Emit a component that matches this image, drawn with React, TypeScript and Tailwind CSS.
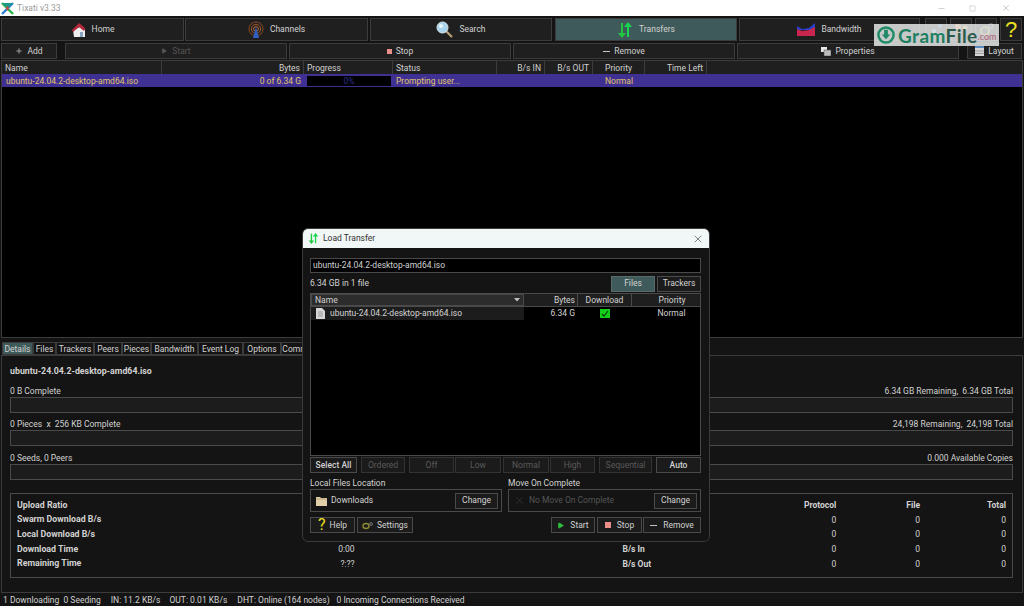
import React from "react";
import { Minus, Square, X, Plus, Play } from "lucide-react";

const TixatiLogo = () => (
  <svg width="13" height="13" viewBox="0 0 13 13">
    <path d="M1 1 L12 12" stroke="#2bb34a" strokeWidth="2.4" />
    <path d="M12 1 L1 12" stroke="#2f7fd0" strokeWidth="2.4" />
    <path d="M1 1 H12 L6.5 6 Z" fill="#1c9a8a" />
    <path d="M5 6 L6.5 4 L8 6 L6.5 9 Z" fill="#d8433a" />
  </svg>
);

const HomeIcon = () => (
  <svg width="15" height="16" viewBox="0 0 15 16">
    <path d="M2 8 L9 5 L14 8 V15 H3 Z" fill="#eeeeee" />
    <path d="M1 8 L8 1 L14 6 L13 9 L8 5 L2 10 Z" fill="#b5283a" />
    <rect x="9" y="10" width="3" height="5" fill="#8aa6c0" />
  </svg>
);

const ChannelsIcon = () => (
  <svg width="16" height="17" viewBox="0 0 16 17" fill="none">
    <circle cx="8" cy="8" r="7" stroke="#8a4a24" />
    <circle cx="8" cy="8" r="4.6" stroke="#a05a2c" />
    <circle cx="8" cy="8" r="2.4" stroke="#b8703a" />
    <path d="M8 6 L11 17 H5 Z" fill="#2f5fc0" />
  </svg>
);

const SearchIcon = () => (
  <svg width="17" height="17" viewBox="0 0 17 17" fill="none">
    <path d="M10 10 L16 16" stroke="#b9a078" strokeWidth="2.2" />
    <circle cx="6.5" cy="6.5" r="5.5" fill="#a9d4ec" stroke="#d7e6ee" />
    <circle cx="5" cy="5" r="2" fill="#e9f6fc" />
  </svg>
);

const TransferArrows = ({ size = 16 }: { size?: number }) => (
  <svg width={size} height={size} viewBox="0 0 16 16" fill="#1fc83c">
    <path d="M4 1 H6 V11 H9 L5 16 L1 11 H4 Z" />
    <path d="M10 15 H12 V5 H15 L11 0 L7 5 H10 Z" fill="#18d850" />
  </svg>
);

const BandwidthIcon = () => (
  <svg width="18" height="13" viewBox="0 0 18 13">
    <path d="M0 3 L5 6 L12 5 L18 0 V7 H0 Z" fill="#2a3fc8" />
    <path d="M0 6 L5 8 L12 7 L18 4 V13 H0 Z" fill="#c8264e" />
  </svg>
);

const NavButton = ({
  label,
  icon,
  width,
  active,
}: {
  label: string;
  icon: React.ReactNode;
  width: string;
  active?: boolean;
}) => (
  <div
    className={`${width} h-full flex items-center justify-center gap-[6px] border border-[#3c3c3c] ${
      active ? "bg-[#3f5a5a]" : "bg-[#1f1f1f]"
    }`}
  >
    {icon}
    <span>{label}</span>
  </div>
);

const ToolButton = ({
  width,
  dim,
  children,
}: {
  width: string;
  dim?: boolean;
  children: React.ReactNode;
}) => (
  <div
    className={`${width} h-full flex items-center justify-center gap-[4px] border border-[#3c3c3c] bg-[#1f1f1f] ${
      dim ? "text-[#555555]" : ""
    }`}
  >
    {children}
  </div>
);

const HeaderCell = ({
  width,
  align,
  children,
}: {
  width: string;
  align: string;
  children?: React.ReactNode;
}) => (
  <div className={`${width} h-full flex items-center px-[3px] pt-[1px] border-r border-[#3c3c3c] ${align}`}>
    {children}
  </div>
);

const SmallButton = ({
  width,
  dim,
  active,
  children,
}: {
  width: string;
  dim?: boolean;
  active?: boolean;
  children: React.ReactNode;
}) => (
  <div
    className={`${width} h-[16px] shrink-0 flex items-center justify-center gap-[4px] border ${
      active ? "bg-[#3f5a5a] border-[#5a6a6a]" : "bg-[#1b1b1b] border-[#4a4a4a]"
    } ${dim ? "text-[#5a5a5a] border-[#333333]" : ""}`}
  >
    {children}
  </div>
);

const ProgressGroup = ({
  left,
  right,
  gap,
}: {
  left: string;
  right: string;
  gap: string;
}) => (
  <div className={gap}>
    <div className="flex justify-between h-[13px] pt-[1px] items-center whitespace-pre">
      <span>{left}</span>
      <span>{right}</span>
    </div>
    <div className="h-[16px] border border-[#4a4a4a] bg-[#1c1c1c]" />
  </div>
);

const StatRow = ({
  label,
  value,
  mid,
  bold,
  nums,
}: {
  label: string;
  value?: string;
  mid?: string;
  bold?: boolean;
  nums: string[];
}) => (
  <div className="h-[14.7px] flex items-center">
    <span className="w-[280px] font-bold text-[8.8px]">{label}</span>
    <span className="w-[58px] text-right">{value}</span>
    <span className="w-[269px] pl-[268px] whitespace-nowrap font-bold">{mid}</span>
    <span className={`w-[213px] text-right ${bold ? "font-bold" : ""}`}>{nums[0]}</span>
    <span className={`w-[84px] text-right ${bold ? "font-bold" : ""}`}>{nums[1]}</span>
    <span className={`w-[86px] text-right ${bold ? "font-bold" : ""}`}>{nums[2]}</span>
  </div>
);

const LoadTransferDialog = () => (
  <div className="absolute left-[302px] top-[228px] w-[408px] h-[314px] rounded-[6px] bg-[#141414] border border-[#3a3a3a] overflow-hidden flex flex-col">
    <div className="h-[19px] bg-[#f1f6f7] flex items-center pl-[5px] pr-[5px] gap-[4px] text-[#333333]">
      <TransferArrows size={11} />
      <span className="flex-1">Load Transfer</span>
      <X size={12} strokeWidth={1.2} color="#333333" />
    </div>
    <div className="flex-1 flex flex-col pl-[7px] pr-[8px]">
      <div className="mt-[10px] h-[15px] bg-black border border-[#4a4a4a] flex items-center px-[2px]">
        ubuntu-24.04.2-desktop-amd64.iso
      </div>
      <div className="mt-[2px] h-[17px] flex items-center gap-[2px]">
        <span className="flex-1">6.34 GB in 1 file</span>
        <SmallButton width="w-[44px]" active>Files</SmallButton>
        <SmallButton width="w-[44px]">Trackers</SmallButton>
      </div>
      <div className="mt-[1px] h-[163px] bg-black border border-[#4a4a4a]">
        <div className="h-[13px] flex bg-[#1f1f1f] border-b border-[#4a4a4a]">
          <div className="w-[213px] px-[3px] flex items-center justify-between bg-[#2c2c2c] border border-[#4a4a4a]">
            <span>Name</span>
            <svg width="6" height="4" viewBox="0 0 6 4">
              <path d="M0 0 L3 3.5 L6 0 Z" fill="#c0c0c0" />
            </svg>
          </div>
          <div className="w-[54px] px-[2px] flex items-center justify-end border-r border-[#4a4a4a]">Bytes</div>
          <div className="w-[54px] flex items-center justify-center border-r border-[#4a4a4a]">Download</div>
          <div className="flex-1 pl-[12px] flex items-center justify-center">Priority</div>
        </div>
        <div className="h-[13px] flex items-center">
          <div className="w-[213px] h-full bg-[#1c1c1c] flex items-center gap-[5px] pl-[5px]">
            <svg width="9" height="11" viewBox="0 0 9 11">
              <path d="M0 0 H6 L9 3 V11 H0 Z" fill="#d8d8d8" />
              <path d="M2 4 H7 M2 6 H7 M2 8 H7" stroke="#999999" />
            </svg>
            <span>ubuntu-24.04.2-desktop-amd64.iso</span>
          </div>
          <div className="w-[51px] text-right">6.34 G</div>
          <div className="w-[60px] flex justify-center">
            <div className="w-[10px] h-[9px] bg-[#12d018] flex items-center justify-center">
              <svg width="8" height="7" viewBox="0 0 8 7" fill="none">
                <path d="M1 4 L3 6 L7 1" stroke="#0a3a0a" strokeWidth="1.2" />
              </svg>
            </div>
          </div>
          <div className="flex-1 pl-[8px] text-center">Normal</div>
        </div>
      </div>
      <div className="mt-[1px] flex">
        <SmallButton width="w-[47px] font-medium">Select All</SmallButton>
        <div className="ml-[4px]"><SmallButton width="w-[44px]" dim>Ordered</SmallButton></div>
        <div className="ml-[4px]"><SmallButton width="w-[45px]" dim>Off</SmallButton></div>
        <div className="ml-[1px]"><SmallButton width="w-[46px]" dim>Low</SmallButton></div>
        <div className="ml-[2px]"><SmallButton width="w-[46px]" dim>Normal</SmallButton></div>
        <div className="ml-[1px]"><SmallButton width="w-[45px]" dim>High</SmallButton></div>
        <div className="ml-[4px]"><SmallButton width="w-[53px]" dim>Sequential</SmallButton></div>
        <div className="ml-[4px]"><SmallButton width="w-[45px] font-medium">Auto</SmallButton></div>
      </div>
      <div className="mt-[3px] flex gap-[6px]">
        <div className="w-[192px]">
          <div className="h-[13px] pt-[1px] flex items-center">Local Files Location</div>
          <div className="h-[23px] border border-[#4a4a4a] flex items-center pl-[5px] pr-[3px] gap-[4px]">
            <svg width="11" height="10" viewBox="0 0 11 10">
              <path d="M0 1 H4 L5 2 H11 V10 H0 Z" fill="#e0cfa8" />
              <path d="M0 3 H11" stroke="#a08860" strokeWidth="0.6" />
            </svg>
            <span className="flex-1">Downloads</span>
            <SmallButton width="w-[43px]">Change</SmallButton>
          </div>
        </div>
        <div className="flex-1">
          <div className="h-[13px] pt-[1px] flex items-center">Move On Complete</div>
          <div className="h-[23px] border border-[#4a4a4a] flex items-center pl-[5px] pr-[3px] gap-[4px]">
            <X size={11} strokeWidth={1.2} color="#444444" />
            <span className="flex-1 text-[#555555]">No Move On Complete</span>
            <SmallButton width="w-[43px]">Change</SmallButton>
          </div>
        </div>
      </div>
      <div className="mt-[5px] flex">
        <SmallButton width="w-[45px]">
          <span className="text-[#e8e020] text-[16px] leading-none">?</span>
          <span>Help</span>
        </SmallButton>
        <div className="ml-[2px]">
          <SmallButton width="w-[56px]">
            <svg width="11" height="9" viewBox="0 0 11 9" fill="none">
              <ellipse cx="4" cy="5" rx="3" ry="2.5" stroke="#8a8a30" strokeWidth="1.4" />
              <circle cx="9" cy="3" r="1.4" stroke="#777777" />
            </svg>
            <span>Settings</span>
          </SmallButton>
        </div>
        <div className="ml-[138px]">
          <SmallButton width="w-[44px]">
            <Play size={7} fill="#30c040" color="#30c040" />
            <span className="ml-[2px]">Start</span>
          </SmallButton>
        </div>
        <div className="ml-[2px]">
          <SmallButton width="w-[45px]">
            <div className="w-[6px] h-[6px] bg-[#e89088]" />
            <span className="ml-[2px]">Stop</span>
          </SmallButton>
        </div>
        <div className="ml-[1px]">
          <SmallButton width="w-[58px]">
            <div className="w-[7px] h-[1px] bg-[#c0c0c0]" />
            <span className="ml-[2px]">Remove</span>
          </SmallButton>
        </div>
      </div>
    </div>
  </div>
);

const Watermark = () => (
  <div className="absolute left-[874px] top-[24px] w-[125px] h-[22px] bg-[#e4e8e6]/85 flex items-center pl-[3px]">
    <svg className="shrink-0" width="18" height="18" viewBox="0 0 19 19">
      <circle cx="9.5" cy="9.5" r="8" fill="none" stroke="#1f8a68" strokeWidth="2.6" />
      <path d="M7.5 4 H11.5 V9 H14 L9.5 14 L5 9 H7.5 Z" fill="#1f8a68" />
    </svg>
    <span className="ml-[3px] font-['Lato',sans-serif] font-bold text-[19px] tracking-[0.4px] leading-none text-[#1f7f62]">
      Gram<span className="text-[#2b5a4c]">File</span>
    </span>
    <span className="font-['Lato',sans-serif] text-[9px] leading-none mt-[3px] text-[#b0607a]">.com</span>
  </div>
);

export default function App() {
  return (
    <div className="relative w-[1024px] h-[606px] overflow-hidden bg-[#141414] text-[#d2d2d2] text-[8.5px] leading-none font-['Roboto','Noto_Sans',sans-serif] flex flex-col">
      {/* title bar */}
      <div className="h-[16px] bg-white flex items-center pl-[1px] text-[#9a9a9a]">
        <TixatiLogo />
        <span className="ml-[3px] flex-1">Tixati v3.33</span>
        <Minus size={9} strokeWidth={1} color="#888888" />
        <div className="ml-[23px]"><Square size={7} strokeWidth={1} color="#888888" /></div>
        <div className="ml-[25px] mr-[13px]"><X size={10} strokeWidth={1} color="#888888" /></div>
      </div>

      {/* main nav */}
      <div className="h-[23px] mt-[2px] flex pl-[1px]">
        <NavButton label="Home" icon={<HomeIcon />} width="w-[183px]" />
        <div className="w-[1px]" />
        <NavButton label="Channels" icon={<ChannelsIcon />} width="w-[183px]" />
        <div className="w-[2px]" />
        <NavButton label="Search" icon={<SearchIcon />} width="w-[182px]" />
        <div className="w-[3px]" />
        <NavButton label="Transfers" icon={<TransferArrows />} width="w-[182px]" active />
        <div className="w-[2px]" />
        <NavButton label="Bandwidth" icon={<BandwidthIcon />} width="w-[181px]" />
        <div className="w-[5px]" />
        <div className="w-[22px] border border-[#3c3c3c] bg-[#1f1f1f] flex items-center justify-center">
          <svg width="16" height="14" viewBox="0 0 16 14">
            <circle cx="12" cy="3" r="2" fill="#2f7fe0" />
            <circle cx="6" cy="8" r="2" fill="#6a9ad0" />
            <circle cx="13" cy="11" r="2" fill="#6a9ad0" />
          </svg>
        </div>
        <div className="w-[3px]" />
        <div className="w-[22px] border border-[#3c3c3c] bg-[#1f1f1f] flex items-center justify-center">
          <svg width="16" height="14" viewBox="0 0 16 14">
            <circle cx="5" cy="4" r="3" fill="#d88030" />
            <circle cx="12" cy="5" r="2.5" fill="#d8a040" />
          </svg>
        </div>
        <div className="w-[3px]" />
        <div className="w-[22px] border border-[#3c3c3c] bg-[#1f1f1f] flex items-center justify-center">
          <svg width="16" height="14" viewBox="0 0 16 14" fill="none">
            <circle cx="7" cy="8" r="4" stroke="#a0a040" strokeWidth="2" />
            <circle cx="13" cy="3" r="2" stroke="#707080" strokeWidth="1.4" />
          </svg>
        </div>
        <div className="w-[3px]" />
        <div className="w-[22px] border border-[#3c3c3c] bg-[#1f1f1f] flex items-center justify-center text-[#e8e020] text-[22px] font-['Liberation_Sans',sans-serif]">
          ?
        </div>
      </div>

      {/* toolbar */}
      <div className="h-[16px] mt-[2px] flex pl-[1px]">
        <ToolButton width="w-[56px]">
          <Plus size={8} strokeWidth={2} />
          <span>Add</span>
        </ToolButton>
        <div className="w-[8px]" />
        <ToolButton width="w-[222px]" dim>
          <Play size={6} fill="#555555" color="#555555" />
          <span className="ml-[1px]">Start</span>
        </ToolButton>
        <div className="w-[2px]" />
        <ToolButton width="w-[222px]">
          <div className="w-[5px] h-[5px] bg-[#e89088]" />
          <span>Stop</span>
        </ToolButton>
        <div className="w-[2px]" />
        <ToolButton width="w-[222px]">
          <div className="w-[7px] h-[1px] bg-[#c8c8c8]" />
          <span>Remove</span>
        </ToolButton>
        <div className="w-[2px]" />
        <ToolButton width="w-[222px]">
          <svg width="10" height="9" viewBox="0 0 10 9">
            <rect x="0" y="0" width="6" height="5" fill="#e8e8e8" />
            <rect x="3" y="3" width="7" height="6" fill="#bcbcbc" stroke="#444444" strokeWidth="0.5" />
          </svg>
          <span>Properties</span>
        </ToolButton>
        <div className="w-[8px]" />
        <ToolButton width="w-[55px]">
          <svg width="9" height="10" viewBox="0 0 9 10">
            <rect width="9" height="10" fill="#d8d8d8" />
            <rect y="0" width="9" height="2" fill="#5a8ac0" />
            <path d="M0 5 H9 M0 7.5 H9" stroke="#777777" strokeWidth="0.6" />
          </svg>
          <span>Layout</span>
        </ToolButton>
      </div>

      {/* transfers list */}
      <div className="h-[278px] mt-[1px] mx-[1px] bg-black border border-[#3c3c3c] flex flex-col">
        <div className="h-[13px] bg-[#1f1f1f] flex">
          <HeaderCell width="w-[160px]" align="justify-start">Name</HeaderCell>
          <HeaderCell width="w-[142px]" align="justify-end">Bytes</HeaderCell>
          <HeaderCell width="w-[89px]" align="justify-start">Progress</HeaderCell>
          <HeaderCell width="w-[104px]" align="justify-start">Status</HeaderCell>
          <HeaderCell width="w-[48px]" align="justify-end">B/s IN</HeaderCell>
          <HeaderCell width="w-[48px]" align="justify-end">B/s OUT</HeaderCell>
          <HeaderCell width="w-[52px]" align="justify-center">Priority</HeaderCell>
          <HeaderCell width="w-[62px]" align="justify-end">Time Left</HeaderCell>
        </div>
        <div className="h-[13px] pt-[1px] bg-[#3f3194] text-[#e0c465] flex items-center">
          <div className="w-[160px] pl-[4px]">ubuntu-24.04.2-desktop-amd64.iso</div>
          <div className="w-[142px] pr-[3px] text-right">0 of 6.34 G</div>
          <div className="w-[89px] pl-[3px] pr-[2px]">
            <div className="h-[10px] bg-black text-[#2c2c90] flex items-center justify-center">0%</div>
          </div>
          <div className="w-[104px] pl-[3px]">Prompting user...</div>
          <div className="w-[96px]" />
          <div className="w-[52px] text-center">Normal</div>
        </div>
      </div>

      {/* detail tabs */}
      <div className="h-[13px] mt-[4px] ml-[2px] flex">
        {[
          ["Details", "w-[31px] bg-[#3f5a5a]"],
          ["Files", "w-[23px]"],
          ["Trackers", "w-[38px]"],
          ["Peers", "w-[28px]"],
          ["Pieces", "w-[29px]"],
          ["Bandwidth", "w-[47px]"],
          ["Event Log", "w-[45px]"],
          ["Options", "w-[38px]"],
          ["Comment", "w-[40px]"],
        ].map(([name, cls]) => (
          <div
            key={name}
            className={`${cls} pt-[1px] flex items-center justify-center border border-[#3c3c3c] overflow-hidden whitespace-nowrap`}
          >
            {name}
          </div>
        ))}
      </div>

      {/* detail panel */}
      <div className="h-[238px] mx-[1px] border border-[#3c3c3c] flex flex-col pl-[8px] pr-[9px]">
        <div className="mt-[9px] h-[12px] font-bold text-[8.8px] flex items-center">ubuntu-24.04.2-desktop-amd64.iso</div>
        <ProgressGroup gap="mt-[7px]" left="0 B Complete" right="6.34 GB Remaining,  6.34 GB Total" />
        <ProgressGroup gap="mt-[4px]" left="0 Pieces  x  256 KB Complete" right="24,198 Remaining,  24,198 Total" />
        <ProgressGroup gap="mt-[5px]" left="0 Seeds, 0 Peers" right="0.000 Available Copies" />
        <div className="mt-[13px] h-[85px] border border-[#4a4a4a] px-[6px] pb-[2px] flex flex-col justify-center">
          <StatRow label="Upload Ratio" bold nums={["Protocol", "File", "Total"]} />
          <StatRow label="Swarm Download B/s" nums={["0", "0", "0"]} />
          <StatRow label="Local Download B/s" nums={["0", "0", "0"]} />
          <StatRow label="Download Time" value="0:00" mid="B/s In" nums={["0", "0", "0"]} />
          <StatRow label="Remaining Time" value="?:??" mid="B/s Out" nums={["0", "0", "0"]} />
        </div>
      </div>

      {/* status bar */}
      <div className="flex-1 pt-[1px] flex items-center pl-[3px] whitespace-pre">
        <span>1 Downloading  0 Seeding</span>
        <span className="ml-[10px]">IN: 11.2 KB/s</span>
        <span className="ml-[9px]">OUT: 0.01 KB/s</span>
        <span className="ml-[10px]">DHT: Online (164 nodes)</span>
        <span className="ml-[7px]">0 Incoming Connections Received</span>
      </div>

      <LoadTransferDialog />
      <Watermark />
    </div>
  );
}
